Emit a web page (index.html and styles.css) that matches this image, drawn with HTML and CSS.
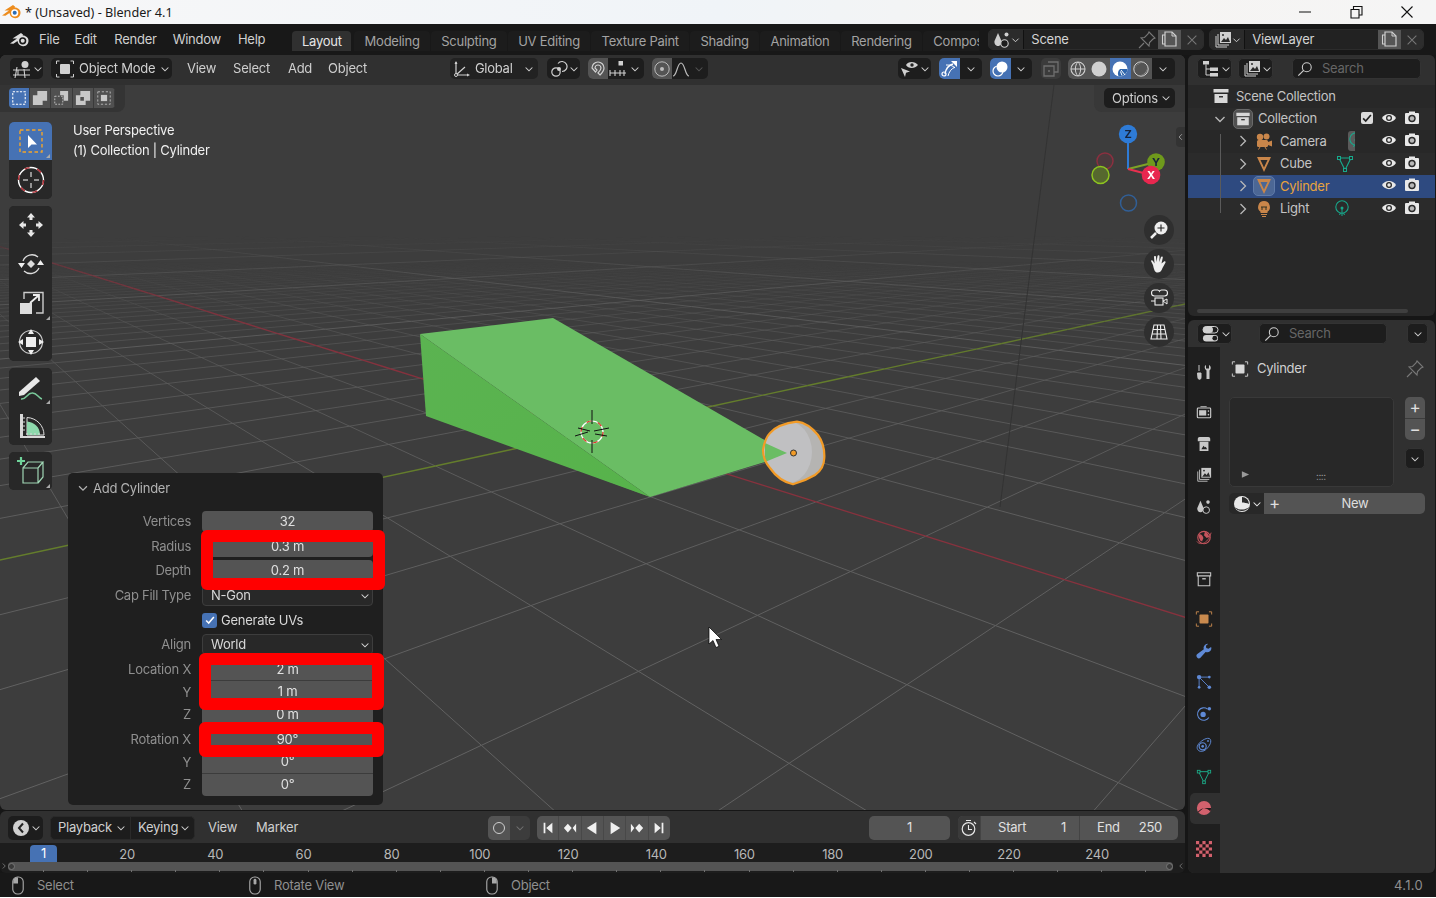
FILE: index.html
```html
<!DOCTYPE html>
<html lang="en">
<head>
<meta charset="utf-8">
<title>* (Unsaved) - Blender 4.1</title>
<link rel="stylesheet" href="styles.css">
</head>
<body>
<svg class="defs" width="0" height="0" aria-hidden="true">
  <symbol id="chev" viewBox="0 0 16 16"><path d="M3.5 6l4.5 4.5L12.500 6" fill="none" stroke="currentColor" stroke-width="1.4"/></symbol>
  <symbol id="chevr" viewBox="0 0 16 16"><path d="M5.500 3l5 5-5 5" fill="none" stroke="currentColor" stroke-width="1.3"/></symbol>
  <symbol id="blender" viewBox="0 0 20 20"><path d="M12 3L3.500 8.600H8L1 13.400l3.400.4L8.500 11c.4 3 3.200 5.500 6 5.200 3-.2 5-2.700 5-5.500S16.800 5.600 14 5.600l-.4-.1 .6-.8z" fill="currentColor"/><circle cx="13.700" cy="10.800" r="3.600" fill="var(--logo-ring)"/><circle cx="13.700" cy="10.800" r="2" fill="var(--logo-eye)"/></symbol>
  <symbol id="viewport" viewBox="0 0 20 20"><circle cx="13" cy="5.500" r="3.500" fill="currentColor"/><path d="M1 11h17M1 16h17M5 8l-2 11M12 10l1 9M6 11v5" fill="none" stroke="currentColor" stroke-width="1.100"/></symbol>
  <symbol id="objmode" viewBox="0 0 20 20"><rect x="5" y="5" width="10" height="10" rx="1" fill="currentColor"/><path d="M1.500 5V2h3M15.500 2h3v3M18.500 15v3h-3M4.500 18h-3v-3" fill="none" stroke="currentColor" stroke-width="1"/></symbol>
  <symbol id="global" viewBox="0 0 18 18"><path d="M3 15V2M3 15l12 0M3 15l9-8" fill="none" stroke="currentColor" stroke-width="1.200"/><path d="M1.500 4L3 1l1.500 3zM14 13.500l3 1.500-3 1.500z" fill="currentColor"/><circle cx="3" cy="15" r="1.500" fill="#222" stroke="currentColor"/></symbol>
  <symbol id="pivot" viewBox="0 0 18 18"><circle cx="6" cy="12" r="4.200" fill="none" stroke="currentColor" stroke-width="1.200"/><path d="M8 3.500a5 5 0 1 1 4 8" fill="none" stroke="currentColor" stroke-width="1.200"/><circle cx="9" cy="9" r="2" fill="currentColor"/></symbol>
  <symbol id="magnet" viewBox="0 0 18 18"><path d="M3 8a6 6 0 0 1 12 0c0 3-2 5-4 7l-2-2c1.500-1.500 3-3 3-5a3 3 0 0 0-6 0l2 2-1.500 2z" fill="none" stroke="currentColor" stroke-width="1.200"/></symbol>
  <symbol id="snap" viewBox="0 0 18 18"><rect x="9.500" y="1" width="4.500" height="4.500" fill="currentColor"/><path d="M1 13h16M1 10v6M6 10v6M11 10v6M15 10v6" fill="none" stroke="currentColor" stroke-width="1.100"/></symbol>
  <symbol id="propcircle" viewBox="0 0 18 18"><circle cx="9" cy="9" r="7.200" fill="none" stroke="currentColor" stroke-width="1"/><circle cx="9" cy="9" r="2" fill="currentColor"/></symbol>
  <symbol id="falloff" viewBox="0 0 18 18"><path d="M1 16c4 0 4-13 8-13s4 13 8 13" fill="none" stroke="currentColor" stroke-width="1.200"/></symbol>
  <symbol id="visib" viewBox="0 0 20 20"><path d="M7 6c2-4 9-4 12 0-3 4-10 4-12 0z" fill="currentColor"/><circle cx="13" cy="6" r="1.700" fill="#222"/><path d="M2 9l9 3.500-4 1.200L6 18z" fill="currentColor"/></symbol>
  <symbol id="gizmo" viewBox="0 0 18 18"><path d="M5 14C6 8 9 5 13 4" fill="none" stroke="currentColor" stroke-width="1.300"/><path d="M8 16C9 12 11 9 15 7M6 5c3 0 6 0 9 3" fill="none" stroke="currentColor" stroke-width="1"/><path d="M11 1h6v6z" fill="currentColor"/><circle cx="4" cy="14" r="2" fill="none" stroke="currentColor" stroke-width="1.200"/></symbol>
  <symbol id="overlay" viewBox="0 0 18 18"><circle cx="7" cy="11" r="5" fill="none" stroke="currentColor" stroke-width="1.200"/><circle cx="11" cy="7" r="5.500" fill="currentColor"/></symbol>
  <symbol id="xray" viewBox="0 0 18 18"><path d="M6 2h10v10H12M2 6h10v10H2z" fill="none" stroke="currentColor" stroke-width="1.300"/><circle cx="7" cy="11" r="1" fill="currentColor"/></symbol>
  <symbol id="wire" viewBox="0 0 18 18"><circle cx="9" cy="9" r="7" fill="none" stroke="currentColor" stroke-width="1.100"/><path d="M2 9h14M9 2c-3.500 3-3.500 11 0 14M9 2c3.500 3 3.500 11 0 14" fill="none" stroke="currentColor"/></symbol>
  <symbol id="solid" viewBox="0 0 18 18"><circle cx="9" cy="9" r="7.500" fill="currentColor"/></symbol>
  <symbol id="matball" viewBox="0 0 18 18"><circle cx="9" cy="9" r="7.500" fill="currentColor"/><path d="M9 9l7.500 0a7.500 7.500 0 0 1-9 7.300C6 12 8 10 9 9z" fill="#2f66ad"/><path d="M10 10l4 5M9.500 11.500l1.500 4" stroke="currentColor" fill="none"/></symbol>
  <symbol id="rendered" viewBox="0 0 18 18"><circle cx="9" cy="9" r="7.200" fill="none" stroke="currentColor" stroke-width="1"/><path d="M3.500 9A5.500 5.500 0 0 1 9 3.500 5 5 0 0 0 3.500 9zM15 9a6 6 0 0 1-6 6 8 8 0 0 0 6-6z" fill="currentColor"/></symbol>
  <symbol id="pin" viewBox="0 0 18 18"><path d="M11 1l6 6-2 1-3.500 3.500L11 15 3 7l3.500-.5L10 3zM6 12l-5 5" fill="none" stroke="currentColor" stroke-width="1.100"/></symbol>
  <symbol id="newcopy" viewBox="0 0 18 18"><path d="M4 13H1.500V4H4" fill="none" stroke="currentColor" stroke-width="1.100"/><path d="M4 1h7l4 4v10H4z" fill="none" stroke="currentColor" stroke-width="1.200"/><path d="M11 1v4h4" fill="none" stroke="currentColor"/></symbol>
  <symbol id="cross" viewBox="0 0 16 16"><path d="M3 3l10 10M13 3L3 13" fill="none" stroke="currentColor" stroke-width="1.200"/></symbol>
  <symbol id="scene" viewBox="0 0 18 18"><path d="M5 2l3.500 8c.6 2.500-1 5-3.500 5s-4-2.500-3.500-5z" fill="currentColor"/><circle cx="13.500" cy="3.500" r="2" fill="currentColor"/><circle cx="11.500" cy="12.500" r="3.700" fill="var(--panel,#1d1d1d)" stroke="currentColor" stroke-width="1.100"/></symbol>
  <symbol id="layers" viewBox="0 0 18 18"><path d="M2 5v11h11M4 3v11h11" fill="none" stroke="currentColor" stroke-width="1"/><rect x="6" y="1" width="11" height="11" fill="currentColor"/><path d="M7 11l3-4 2 2 2-3 2 5z" fill="#2a2a2a"/><circle cx="9" cy="4" r="1" fill="#2a2a2a"/></symbol>
  <symbol id="outliner" viewBox="0 0 18 18"><rect x="1" y="1" width="6" height="3.500" fill="currentColor"/><path d="M4 4.500V15h4M4 9h4" fill="none" stroke="currentColor"/><rect x="8" y="7.500" width="8" height="3.500" fill="currentColor"/><rect x="8" y="13" width="8" height="3.500" fill="currentColor"/></symbol>
  <symbol id="propsed" viewBox="0 0 18 18"><rect x="1" y="1.500" width="15" height="6.500" rx="3.200" fill="none" stroke="currentColor" stroke-width="1"/><rect x="1" y="1.500" width="10" height="6.500" rx="3.200" fill="currentColor"/><rect x="1" y="10" width="15" height="6.500" rx="3.200" fill="currentColor"/><circle cx="12.800" cy="13.200" r="2.400" fill="#1d1d1d"/></symbol>
  <symbol id="search" viewBox="0 0 18 18"><circle cx="11" cy="7" r="5" fill="none" stroke="currentColor" stroke-width="1.200"/><path d="M7.500 10.500L1.500 16.500" fill="none" stroke="currentColor" stroke-width="1.400"/></symbol>
  <symbol id="coll" viewBox="0 0 18 18"><path d="M1.500 2h15v3.500h-15z" fill="currentColor"/><path d="M2.500 7h13v9h-13z" fill="currentColor"/><rect x="7" y="9" width="4" height="1.500" fill="#333"/></symbol>
  <symbol id="camera" viewBox="0 0 18 18"><circle cx="5" cy="5" r="3.200" fill="currentColor"/><circle cx="11.500" cy="4.500" r="3" fill="currentColor"/><rect x="2" y="8" width="11" height="7" rx="1.500" fill="currentColor"/><path d="M13 10l4-1.500v6L13 13z" fill="currentColor"/><path d="M5 15l-1.500 2.500M10 15l1.500 2.500" stroke="currentColor" fill="none"/></symbol>
  <symbol id="mesh" viewBox="0 0 18 18"><path d="M2 2h14L9 17zM5.500 5h7L9 12.500z" fill="currentColor" fill-rule="evenodd"/></symbol>
  <symbol id="bulb" viewBox="0 0 18 18"><path d="M9 1a6 6 0 0 1 3.500 10.800V13h-7v-1.200A6 6 0 0 1 9 1z" fill="currentColor"/><path d="M6 14.500h6M7 16.500h4" stroke="currentColor" fill="none"/><path d="M6 7h6M7 7v3M11 7v3" stroke="#332" fill="none"/></symbol>
  <symbol id="dmesh" viewBox="0 0 18 18"><path d="M3 3h12L9 15z" fill="none" stroke="currentColor" stroke-width="1.100"/><rect x="1.500" y="1.500" width="3" height="3" fill="var(--dm)" stroke="currentColor"/><rect x="13.500" y="1.500" width="3" height="3" fill="var(--dm)" stroke="currentColor"/><rect x="7.500" y="13.500" width="3" height="3" fill="var(--dm)" stroke="currentColor"/></symbol>
  <symbol id="dlight" viewBox="0 0 18 18"><circle cx="9" cy="7" r="6.200" fill="none" stroke="currentColor" stroke-width="1.100"/><circle cx="9" cy="8" r="1.500" fill="currentColor"/><path d="M9 9v7M7.500 13l-1 2M10.500 13l1 2" stroke="currentColor" fill="none"/></symbol>
  <symbol id="eye" viewBox="0 0 16 16"><path d="M1 8c3-5.500 11-5.500 14 0-3 5.500-11 5.500-14 0z" fill="currentColor"/><circle cx="8" cy="8" r="3" fill="#2b2b2b"/><circle cx="8" cy="8" r="1.700" fill="currentColor"/></symbol>
  <symbol id="render" viewBox="0 0 16 16"><rect x="1" y="3" width="14" height="11" rx="1" fill="currentColor"/><rect x="5" y="1.500" width="6" height="2" fill="currentColor"/><circle cx="8" cy="8.500" r="3.700" fill="#2b2b2b"/><circle cx="8" cy="8.500" r="2.200" fill="currentColor" opacity=".75"/></symbol>
  <symbol id="tool" viewBox="0 0 16 16"><path d="M3 1v6M1.500 9h3.500v4.500A1.500 1.500 0 0 1 2 14z" fill="currentColor" stroke="currentColor"/><path d="M10 1v3.500h3V1c2 1 2.500 4 .5 5.500V15h-3V6.500C8.500 5 8 2 10 1z" fill="currentColor"/></symbol>
  <symbol id="tabrender" viewBox="0 0 18 18"><path d="M5 3h7" stroke="currentColor" fill="none"/><rect x="1.500" y="4.500" width="15" height="11" rx="1" fill="none" stroke="currentColor" stroke-width="1.300"/><rect x="3.500" y="7" width="8" height="6" fill="currentColor"/><circle cx="14" cy="8" r=".9" fill="currentColor"/><circle cx="14" cy="12" r=".9" fill="currentColor"/></symbol>
  <symbol id="printer" viewBox="0 0 18 18"><path d="M2 3q0-2 2-2h10q2 0 2 2v3H2z" fill="currentColor"/><path d="M4 6.500h10V17H4z" fill="currentColor"/><path d="M6 15l2.500-4 1.500 2 1-1 1.500 3z" fill="#222"/></symbol>
  <symbol id="world" viewBox="0 0 18 18"><circle cx="9" cy="8.500" r="7" fill="none" stroke="currentColor" stroke-width="1.300"/><path d="M3 5c3-1 4 1 5 3s-1 3-1 5l-2-1-2-4zM10 2c3 1 4 3 5 6l-3 1-3-3z" fill="currentColor"/><path d="M1 13C4 17 13 17 17 3" fill="none" stroke="currentColor"/></symbol>
  <symbol id="box" viewBox="0 0 18 18"><path d="M1.500 2h15v3.500h-15zM2.500 5.500h13V16.500h-13z" fill="none" stroke="currentColor" stroke-width="1.200"/><rect x="7" y="8" width="4" height="1.500" fill="currentColor"/></symbol>
  <symbol id="modifier" viewBox="0 0 18 18"><path d="M13.500 1a4.500 4.500 0 0 0-4.700 6L1.500 12.500a2.500 2.500 0 0 0 3.500 4L10.800 10A4.500 4.500 0 0 0 17 4.500L14 6.500l-2.500-1-.3-2.500z" fill="currentColor"/></symbol>
  <symbol id="particles" viewBox="0 0 18 18"><circle cx="3.500" cy="3.500" r="2.500" fill="currentColor"/><circle cx="15" cy="3.500" r="1.500" fill="currentColor"/><circle cx="3.500" cy="15" r="1.500" fill="currentColor"/><circle cx="15" cy="15" r="2" fill="currentColor"/><path d="M3.500 3.500H15M3.500 3.500V15M3.500 3.500L15 15" stroke="currentColor" fill="none"/></symbol>
  <symbol id="physics" viewBox="0 0 18 18"><circle cx="8" cy="9.500" r="3" fill="currentColor"/><circle cx="15" cy="3" r="2" fill="currentColor"/><path d="M13 3.500A7 7 0 1 0 14.500 13" fill="none" stroke="currentColor" stroke-width="1.200"/></symbol>
  <symbol id="constraint" viewBox="0 0 18 18"><path d="M13 1.500c3-.5 4 2 3.500 4.500-1 4-5 9-9 10S.5 14 1.500 10.500C3 6 9 2 13 1.500z" fill="none" stroke="currentColor" stroke-width="1.100"/><circle cx="7.500" cy="10.500" r="4" fill="none" stroke="currentColor" stroke-width="1.300"/><circle cx="7.500" cy="10.500" r="1.500" fill="currentColor"/><circle cx="13.500" cy="4.500" r="1" fill="currentColor"/></symbol>
  <symbol id="material" viewBox="0 0 18 18"><circle cx="9" cy="9" r="8" fill="currentColor"/><path d="M9 9h8c0 1-.3 2.500-.9 3.700C14 10.500 11 9.500 9 9zM9 9c-2 .5-5 2-6.800 4.200l.6.800C5 12 7 10 9 9z" fill="#22181a"/></symbol>
  <symbol id="tmat" viewBox="0 0 18 18"><circle cx="9" cy="9" r="8" fill="currentColor"/><path d="M9 2a7 7 0 0 1 7 7c-2-1-5-1.500-7-1.500z" fill="#2b2b2b"/><path d="M1.500 12c3 3 11 4 15-.5-3 6-12 6-15 .5z" fill="#2b2b2b"/></symbol>
  <symbol id="checker" viewBox="0 0 15 15"><rect width="15" height="15" fill="currentColor"/><path d="M3 0h3v3H3zM9 0h3v3H9zM0 3h3v3H0zM6 3h3v3H6zM12 3h3v3h-3zM3 6h3v3H3zM9 6h3v3H9zM0 9h3v3H0zM6 9h3v3H6zM12 9h3v3h-3zM3 12h3v3H3zM9 12h3v3H9z" fill="#1e1617"/></symbol>
  <symbol id="mouseL" viewBox="0 0 14 20"><rect x="1.500" y="1" width="11" height="18" rx="5" fill="none" stroke="currentColor" stroke-width="1.200"/><path d="M2 8V5a4 4 0 0 1 5-3.500V8z" fill="currentColor"/></symbol>
  <symbol id="mouseM" viewBox="0 0 14 20"><rect x="1.500" y="1" width="11" height="18" rx="5" fill="none" stroke="currentColor" stroke-width="1.200"/><rect x="5.500" y="3" width="3" height="6" rx="1.500" fill="currentColor"/></symbol>
  <symbol id="mouseR" viewBox="0 0 14 20"><rect x="1.500" y="1" width="11" height="18" rx="5" fill="none" stroke="currentColor" stroke-width="1.200"/><path d="M12 8V5a4 4 0 0 0-5-3.500V8z" fill="currentColor"/></symbol>
  <symbol id="clock" viewBox="0 0 18 18"><circle cx="8.500" cy="10" r="6.300" fill="none" stroke="currentColor" stroke-width="1.200"/><path d="M8.500 6v4.500H12M6 1.500h5M14 3l2 2" stroke="currentColor" fill="none" stroke-width="1.100"/></symbol>
  <symbol id="timeicon" viewBox="0 0 18 18"><circle cx="9" cy="9" r="8" fill="currentColor"/><path d="M11 4.500L7 9l4 4.500" fill="none" stroke="#222" stroke-width="2"/></symbol>
  <symbol id="jstart" viewBox="0 0 16 16"><path d="M3 2h2v12H3zM13 2v12L6 8z" fill="currentColor"/></symbol>
  <symbol id="jend" viewBox="0 0 16 16"><path d="M11 2h2v12h-2zM3 2v12l7-6z" fill="currentColor"/></symbol>
  <symbol id="prevk" viewBox="0 0 16 16"><path d="M5.500 3l4.500 5-4.500 5L1 8zM15 3v10l-4-5z" fill="currentColor"/></symbol>
  <symbol id="nextk" viewBox="0 0 16 16"><path d="M10.500 3L15 8l-4.500 5L6 8zM1 3v10l4-5z" fill="currentColor"/></symbol>
  <symbol id="playb" viewBox="0 0 16 16"><path d="M13 1v14L2 8z" fill="currentColor"/></symbol>
  <symbol id="play" viewBox="0 0 16 16"><path d="M3 1v14l11-7z" fill="currentColor"/></symbol>
</svg>

<div class="app">
  <header class="titlebar">
    <svg class="title-logo"><use href="#blender"/></svg>
    <span class="title-text">* (Unsaved) - Blender 4.1</span>
    <div class="win-controls">
      <svg viewBox="0 0 16 16" class="win-ic"><path d="M2 8h12" stroke="#111" fill="none"/></svg>
      <svg viewBox="0 0 16 16" class="win-ic"><path d="M3 5.500h8v8.500H3zM5.500 5V2.500H14V11h-2.500" fill="none" stroke="#111" stroke-width="1.100"/></svg>
      <svg viewBox="0 0 16 16" class="win-ic"><path d="M2.500 2.500l11 11M13.500 2.500l-11 11" stroke="#111" fill="none" stroke-width="1.100"/></svg>
    </div>
  </header>

  <div class="topbar">
    <svg class="top-logo"><use href="#blender"/></svg>
    <nav class="top-menu"><span>File</span><span>Edit</span><span>Render</span><span>Window</span><span>Help</span></nav>
    <div class="ws-tabs">
      <span class="ws-tab active">Layout</span><span class="ws-tab">Modeling</span><span class="ws-tab">Sculpting</span><span class="ws-tab">UV Editing</span><span class="ws-tab">Texture Paint</span><span class="ws-tab">Shading</span><span class="ws-tab">Animation</span><span class="ws-tab">Rendering</span><span class="ws-tab">Compositing</span>
    </div>
    <div class="selector scene-sel">
      <span class="sel-type"><svg class="ic18"><use href="#scene"/></svg><svg class="ic12"><use href="#chev"/></svg></span>
      <span class="sel-name">Scene<svg class="ic18 dim"><use href="#pin"/></svg></span>
      <span class="sel-copy"><svg class="ic18"><use href="#newcopy"/></svg></span>
      <span class="sel-x"><svg class="ic14"><use href="#cross"/></svg></span>
    </div>
    <div class="selector layer-sel">
      <span class="sel-type"><svg class="ic18"><use href="#layers"/></svg><svg class="ic12"><use href="#chev"/></svg></span>
      <span class="sel-name">ViewLayer</span>
      <span class="sel-copy"><svg class="ic18"><use href="#newcopy"/></svg></span>
      <span class="sel-x"><svg class="ic14"><use href="#cross"/></svg></span>
    </div>
  </div>

  <div class="main">
    <div class="left-col">
      <section class="viewport">
        <canvas id="grid" class="vp-grid" width="1185" height="755"></canvas>
        <svg class="vp-scene" viewBox="0 55 1185 755">
          <line x1="1054" y1="85" x2="1000" y2="507" stroke="#333" stroke-width="1"/>
          <defs>
            <linearGradient id="sideface" x1="0" y1="0" x2="1" y2="1"><stop offset="0" stop-color="#5bb351"/><stop offset="1" stop-color="#57b34b"/></linearGradient>
            <clipPath id="cylclip"><path d="M763 450Q765 438 770 433Q778 424 797 421.700Q808 423 818 435Q825 445 824.300 458Q824 469 815 475Q805 481 793 484.300Q779 481 770 468Q763 460 763 450z"/></clipPath>
          </defs>
          <polygon points="420,334 553,318 775,446 765,462 650,497" fill="#6abd64"/>
          <polygon points="420,334 426,416 650,497" fill="url(#sideface)"/>
          <g clip-path="url(#cylclip)">
            <rect x="755" y="415" width="80" height="75" fill="#b5b4b2"/>
            <ellipse cx="785" cy="452" rx="27" ry="32" fill="#c0c0c2"/>
          </g>
          <polygon points="765,443 787,453 765,462" fill="#6abd64"/>
          <path d="M763 450Q765 438 770 433Q778 424 797 421.700Q808 423 818 435Q825 445 824.300 458Q824 469 815 475Q805 481 793 484.300Q779 481 770 468Q763 460 763 450z" fill="none" stroke="#f29b27" stroke-width="2.200"/>
          <circle cx="793.500" cy="453" r="3" fill="#f29b27" stroke="#333" stroke-width="1"/>
          <circle cx="592" cy="432" r="11" fill="none" stroke="#fff" stroke-width="1.200"/>
          <circle cx="592" cy="432" r="11" fill="none" stroke="#d5281a" stroke-width="1.200" stroke-dasharray="5 6.500"/>
          <path d="M592 410v14M592 440v13M575 436l13-4M578 428l12 3M594 431l15-3M595 434l12 2" stroke="#111" fill="none"/>
          <circle cx="1128.500" cy="203" r="8" fill="none" stroke="#315f96" stroke-width="1.500"/>
          <circle cx="1105" cy="161" r="8" fill="#4b3a3d" stroke="#8c3040" stroke-width="1.500"/>
          <circle cx="1100.500" cy="175" r="8.500" fill="#56682e" stroke="#8ec520" stroke-width="1.500"/>
          <path d="M1128 134v35" stroke="#2e7bd6" stroke-width="2"/>
          <path d="M1128 169l28-7" stroke="#7da326" stroke-width="2.200"/>
          <path d="M1128 169l23 6" stroke="#e8304f" stroke-width="2.200"/>
          <circle cx="1128" cy="134" r="9.200" fill="#2e7bd6"/>
          <circle cx="1156" cy="162" r="8.800" fill="#6f9a1c"/>
          <circle cx="1151" cy="175" r="9.300" fill="#e8274f"/>
          <text class="axis-label" x="1128" y="138">Z</text>
          <text class="axis-label" x="1156" y="166">Y</text>
          <text class="axis-label white" x="1151" y="179">X</text>
          <path d="M709 627v17l4-3.500 3 7 3-1.300-3-6.700h5.500z" fill="#fff" stroke="#000" stroke-width=".7"/>
        </svg>

        <div class="vp-header">
          <span class="hbtn w-type"><svg class="ic20"><use href="#viewport"/></svg><svg class="ic12"><use href="#chev"/></svg></span>
          <span class="hbtn w-mode"><svg class="ic20"><use href="#objmode"/></svg><span>Object Mode</span><svg class="ic12"><use href="#chev"/></svg></span>
          <nav class="vp-menu"><span>View</span><span>Select</span><span>Add</span><span>Object</span></nav>
          <span class="hbtn w-global"><svg class="ic18"><use href="#global"/></svg><span>Global</span><svg class="ic12"><use href="#chev"/></svg></span>
          <span class="hbtn w-pivot"><svg class="ic18"><use href="#pivot"/></svg><svg class="ic12"><use href="#chev"/></svg></span>
          <span class="hbtn w-snap"><span class="seg lit"><svg class="ic18"><use href="#magnet"/></svg></span><svg class="ic18"><use href="#snap"/></svg><svg class="ic12"><use href="#chev"/></svg></span>
          <span class="hbtn w-prop"><span class="seg lit"><svg class="ic18"><use href="#propcircle"/></svg></span><svg class="ic18"><use href="#falloff"/></svg><svg class="ic12 faint"><use href="#chev"/></svg></span>
          <span class="hbtn w-vis"><svg class="ic20"><use href="#visib"/></svg><svg class="ic12"><use href="#chev"/></svg></span>
          <span class="hbtn w-giz"><span class="seg blue"><svg class="ic18"><use href="#gizmo"/></svg></span><span class="seg-chev"><svg class="ic12"><use href="#chev"/></svg></span></span>
          <span class="hbtn w-over"><span class="seg blue"><svg class="ic18"><use href="#overlay"/></svg></span><span class="seg-chev"><svg class="ic12"><use href="#chev"/></svg></span></span>
          <span class="hbtn w-xray"><svg class="ic18 faint"><use href="#xray"/></svg></span>
          <span class="hbtn w-shade"><span class="seg lit"><svg class="ic18"><use href="#wire"/></svg></span><span class="seg lit"><svg class="ic18"><use href="#solid"/></svg></span><span class="seg blue"><svg class="ic18"><use href="#matball"/></svg></span><span class="seg lit"><svg class="ic18"><use href="#rendered"/></svg></span><span class="seg-chev"><svg class="ic12"><use href="#chev"/></svg></span></span>
        </div>

        <div class="tool-settings">
          <div class="selmodes">
            <span class="sm on"><svg viewBox="0 0 18 18" class="ic18"><rect x="2" y="2" width="14" height="14" fill="none" stroke="#fff" stroke-width="1.200" stroke-dasharray="2.500 1.500"/></svg></span>
            <span class="sm"><svg viewBox="0 0 18 18" class="ic18"><path d="M6 1h11v11h-5v5H1V6h5z" fill="#c8c8c8"/></svg></span>
            <span class="sm"><svg viewBox="0 0 18 18" class="ic18"><path d="M8 1h9v11h-5V6H8z" fill="#c8c8c8"/><rect x="2" y="7" width="9" height="9" fill="none" stroke="#c8c8c8" stroke-dasharray="2 1.500"/></svg></span>
            <span class="sm"><svg viewBox="0 0 18 18" class="ic18"><path d="M6 1h11v11h-5V6H6zM1 6h11v11H1zM6 8v4h4V8z" fill="#c8c8c8" fill-rule="evenodd"/></svg></span>
            <span class="sm"><svg viewBox="0 0 18 18" class="ic18"><rect x="2" y="2" width="14" height="14" fill="none" stroke="#bbb" stroke-dasharray="2.500 2"/><rect x="5.500" y="5.500" width="7" height="7" fill="#c8c8c8"/></svg></span>
          </div>
        </div>
        <div class="options-tab"><span class="hbtn w-options"><span>Options</span><svg class="ic12"><use href="#chev"/></svg></span></div>
        <span class="panel-arrow"><svg class="ic12"><use href="#chevr"/></svg></span>

        <div class="viewinfo"><div>User Perspective</div><div>(1) Collection | Cylinder</div></div>

        <div class="tools">
          <div class="tool-group">
            <span class="tool on corner"><svg viewBox="0 0 28 28" class="tool-ic"><rect x="3" y="3" width="22" height="22" fill="none" stroke="#f2a52c" stroke-width="1.400" stroke-dasharray="3.500 2.500"/><path d="M11 8v13l3.500-3.500h5.500z" fill="#fff"/></svg></span>
            <span class="tool"><svg viewBox="0 0 28 28" class="tool-ic"><circle cx="14" cy="14" r="12.500" fill="none" stroke="#fff" stroke-width="1.400"/><circle cx="14" cy="14" r="12.500" fill="none" stroke="#b02c34" stroke-width="1.400" stroke-dasharray="5 8"/><path d="M14 6v5M14 17v5M6 14h5M17 14h5" stroke="#fff" fill="none"/></svg></span>
          </div>
          <div class="tool-group">
            <span class="tool"><svg viewBox="0 0 28 28" class="tool-ic"><path d="M14 2l4 4.500h-2.500V9h-3V6.500H10zM14 26l4-4.500h-2.500V19h-3v2.500H10zM2 14l4.500-4v2.500H9v3H6.500V18zM26 14l-4.500-4v2.500H19v3h2.500V18z" fill="#e6e6e6"/></svg></span>
            <span class="tool"><svg viewBox="0 0 28 28" class="tool-ic"><path d="M14 10l4 4-4 4-4-4z" fill="#ddd"/><path d="M6 11A9.500 9.500 0 0 1 21 7M22 18A9.500 9.500 0 0 1 7 21" fill="none" stroke="#ddd" stroke-width="1.300"/><path d="M1 13h7l-3.500 5zM20 15h7l-3.500-5z" fill="#eee"/></svg></span>
            <span class="tool corner"><svg viewBox="0 0 28 28" class="tool-ic"><path d="M7 10V3.500h19V24h-7" fill="none" stroke="#ccc" stroke-width="1.400"/><rect x="3" y="14" width="12" height="11" fill="#ddd"/><path d="M13 14l8-7M16 6h6v6" fill="none" stroke="#eee" stroke-width="1.800"/></svg></span>
            <span class="tool"><svg viewBox="0 0 28 28" class="tool-ic"><circle cx="14" cy="14" r="11.500" fill="none" stroke="#ccc" stroke-width="1.200"/><rect x="9" y="9" width="10" height="10" fill="#eee"/><path d="M14 1l3 5h-6zM14 27l3-5h-6zM1 14l5-3v6zM27 14l-5-3v6z" fill="#eee"/></svg></span>
          </div>
          <div class="tool-group">
            <span class="tool corner"><svg viewBox="0 0 28 28" class="tool-ic"><path d="M2 19L19 4l4 4-16 14-5 1z" fill="#e8e8e8"/><path d="M4 26c5 1 6-6 11-6 5-.5 6 5 10 6" fill="none" stroke="#79c99a" stroke-width="1.500"/></svg></span>
            <span class="tool"><svg viewBox="0 0 28 28" class="tool-ic"><path d="M10 5.500V23h17c0-9-7-17-17-17.500z" fill="none" stroke="#ddd"/><path d="M10 9.500V23h13C23 15 17 10 10 9.500z" fill="#8ed9ad"/><path d="M3 2h3v24H3zM3 24h25v2H3z" fill="#d8d8d8"/><path d="M6 6h2M6 10h2M6 14h2M6 18h2M10 23v-2M14 23v-2M18 23v-2M22 23v-2" stroke="#d8d8d8" fill="none"/></svg></span>
          </div>
          <div class="tool-group">
            <span class="tool corner"><svg viewBox="0 0 28 28" class="tool-ic"><path d="M6 11h15v15H6zM6 11l5-6h15l-5 6M21 26l5-6V5" fill="none" stroke="#9fd6b4" stroke-width="1.200"/><path d="M4 0v8M0 4h8" stroke="#6fd39a" stroke-width="2.200" fill="none"/></svg></span>
          </div>
        </div>

        <div class="nav-btns">
          <span class="nav-btn"><svg viewBox="0 0 20 20" class="ic20"><circle cx="12" cy="8" r="6.500" fill="#eee"/><path d="M7 13l-5 5" stroke="#eee" stroke-width="2.500"/><path d="M12 4.500v7M8.500 8h7" stroke="#222" stroke-width="1.100"/></svg></span>
          <span class="nav-btn"><svg viewBox="0 0 20 20" class="ic20"><path d="M4 11L2 7c0-1 1.500-1 2 0l1.500 2.500L5 3c0-1.200 2-1.200 2 0l.5 5L8.500 2c.2-1.200 2.100-1 2 .2L10.300 8l1.700-5c.4-1 2-.7 1.800.5L12.500 9.500l2.500-2c1-.6 2 .3 1.400 1.300L13.500 14c-1 3-2.500 4.500-5 4.500C6 18.500 5 16 4 11z" fill="#eee"/></svg></span>
          <span class="nav-btn"><svg viewBox="0 0 20 20" class="ic20"><path d="M5.500 2h3a2.200 2.200 0 0 1 2 1.200A2.300 2.300 0 0 1 12.500 2h3a3 3 0 0 1 0 6h-10a3 3 0 0 1 0-6z" fill="none" stroke="#eee" stroke-width="1.100"/><rect x="6" y="10" width="8" height="7" fill="none" stroke="#eee" stroke-width="1.100"/><path d="M6 13H2M14 13l4-2v5z" stroke="#eee" fill="none"/></svg></span>
          <span class="nav-btn"><svg viewBox="0 0 20 20" class="ic20"><path d="M5 3h10l3 14H2zM4 7.500h12M3 12h14M8.500 3L8 17M11.500 3l.5 14" fill="none" stroke="#eee" stroke-width="1.100"/></svg></span>
        </div>

        <div class="redo">
          <div class="redo-title"><svg class="ic14"><use href="#chev"/></svg>Add Cylinder</div>
          <div class="prop-row"><label>Vertices</label><span class="field">32</span></div>
          <div class="prop-row"><label>Radius</label><span class="field">0.3 m</span></div>
          <div class="prop-row"><label>Depth</label><span class="field">0.2 m</span></div>
          <div class="prop-row"><label>Cap Fill Type</label><span class="field dark"><span>N-Gon</span><svg class="ic12"><use href="#chev"/></svg></span></div>
          <div class="prop-row"><span></span><span class="check-row"><span class="check"><svg viewBox="0 0 14 14" class="ic12"><path d="M2.500 7.500L5.500 10.500 11.500 3.500" fill="none" stroke="#fff" stroke-width="1.800"/></svg></span>Generate UVs</span></div>
          <div class="prop-row"><label>Align</label><span class="field dark"><span>World</span><svg class="ic12"><use href="#chev"/></svg></span></div>
          <div class="prop-group g-loc">
            <div class="prop-row tight"><label>Location X</label><span class="field first">2 m</span></div>
            <div class="prop-row tight"><label>Y</label><span class="field">1 m</span></div>
            <div class="prop-row tight"><label>Z</label><span class="field last">0 m</span></div>
          </div>
          <div class="prop-group g-rot">
            <div class="prop-row tight"><label>Rotation X</label><span class="field first">90°</span></div>
            <div class="prop-row tight"><label>Y</label><span class="field">0°</span></div>
            <div class="prop-row tight"><label>Z</label><span class="field last">0°</span></div>
          </div>
        </div>
        <div class="redbox rb-a"></div>
        <div class="redbox rb-b"></div>
        <div class="redbox rb-c"></div>
      </section>

      <section class="timeline">
        <div class="tl-head">
          <span class="hbtn w-tltype"><svg class="ic18"><use href="#timeicon"/></svg><svg class="ic12"><use href="#chev"/></svg></span>
          <span class="hbtn w-play"><span class="tl-pop">Playback<svg class="ic12"><use href="#chev"/></svg></span><span class="tl-pop">Keying<svg class="ic12"><use href="#chev"/></svg></span></span>
          <nav class="tl-menu"><span>View</span><span>Marker</span></nav>
          <span class="tl-rec"><span class="rec-ic"></span><svg class="ic12 faint"><use href="#chev"/></svg></span>
          <span class="tl-trans">
            <span><svg class="ic14"><use href="#jstart"/></svg></span><span><svg class="ic14"><use href="#prevk"/></svg></span><span><svg class="ic14"><use href="#playb"/></svg></span><span><svg class="ic14"><use href="#play"/></svg></span><span><svg class="ic14"><use href="#nextk"/></svg></span><span><svg class="ic14"><use href="#jend"/></svg></span>
          </span>
          <span class="tl-frame">1</span>
          <span class="tl-range">
            <span class="tl-clock"><svg class="ic18"><use href="#clock"/></svg></span>
            <span class="tl-val"><span>Start</span><span>1</span></span>
            <span class="tl-val"><span>End</span><span>250</span></span>
          </span>
        </div>
        <div class="tl-scrub">
          <span class="cur-frame">1</span>
          <div class="ruler"><span>20</span><span>40</span><span>60</span><span>80</span><span>100</span><span>120</span><span>140</span><span>160</span><span>180</span><span>200</span><span>220</span><span>240</span></div>
          <div class="tl-scroll"><i class="knob"></i><i class="knob"></i></div>
          <i class="tl-ticks"></i>
          <svg class="tl-arrow tl-arrow-l"><use href="#chevr"/></svg>
          <svg class="tl-arrow tl-arrow-r"><use href="#chevr"/></svg>
        </div>
      </section>
    </div>

    <div class="right-col">
      <section class="outliner">
        <div class="ol-head">
          <span class="hbtn w-oltype"><svg class="ic18"><use href="#outliner"/></svg><svg class="ic12"><use href="#chev"/></svg></span>
          <span class="hbtn w-oltype"><svg class="ic18"><use href="#layers"/></svg><svg class="ic12"><use href="#chev"/></svg></span>
          <span class="searchbox ol-search"><svg class="ic16"><use href="#search"/></svg>Search</span>
        </div>
        <div class="ol-tree">
          <div class="ol-row lvl0"><svg class="ic18 light"><use href="#coll"/></svg><span class="ol-name">Scene Collection</span></div>
          <div class="ol-row alt lvl1"><svg class="ic16 chev"><use href="#chev"/></svg><span class="coll-hi"><svg class="ic16 light"><use href="#coll"/></svg></span><span class="ol-name">Collection</span>
            <span class="ol-right"><span class="vis-check"><svg viewBox="0 0 14 14" class="ic12"><path d="M2.500 7.500L5.500 10.500 11.500 3.500" fill="none" stroke="#222" stroke-width="2"/></svg></span><svg class="ic16"><use href="#eye"/></svg><svg class="ic16"><use href="#render"/></svg></span></div>
          <div class="ol-row lvl2"><svg class="ic16 chev"><use href="#chevr"/></svg><svg class="ic18 orange"><use href="#camera"/></svg><span class="ol-name n-cam">Camera</span><span class="cam-chip"><svg class="ic18 teal"><use href="#dlight"/></svg></span>
            <span class="ol-right"><svg class="ic16"><use href="#eye"/></svg><svg class="ic16"><use href="#render"/></svg></span></div>
          <div class="ol-row alt lvl2"><svg class="ic16 chev"><use href="#chevr"/></svg><svg class="ic18 orange"><use href="#mesh"/></svg><span class="ol-name n-cube">Cube</span><svg class="ic18 teal"><use href="#dmesh"/></svg>
            <span class="ol-right"><svg class="ic16"><use href="#eye"/></svg><svg class="ic16"><use href="#render"/></svg></span></div>
          <div class="ol-row sel lvl2"><svg class="ic16 chev"><use href="#chevr"/></svg><span class="mesh-hi"><svg class="ic18 orange"><use href="#mesh"/></svg></span><span class="ol-name n-cyl">Cylinder</span>
            <span class="ol-right"><svg class="ic16"><use href="#eye"/></svg><svg class="ic16"><use href="#render"/></svg></span></div>
          <div class="ol-row alt lvl2"><svg class="ic16 chev"><use href="#chevr"/></svg><svg class="ic18 orange"><use href="#bulb"/></svg><span class="ol-name n-light">Light</span><svg class="ic18 teal"><use href="#dlight"/></svg>
            <span class="ol-right"><svg class="ic16"><use href="#eye"/></svg><svg class="ic16"><use href="#render"/></svg></span></div>
          <i class="tree-line"></i>
        </div>
        <div class="ol-scroll"></div>
      </section>

      <section class="props">
        <div class="p-head">
          <span class="hbtn w-oltype"><svg class="ic18"><use href="#propsed"/></svg><svg class="ic12"><use href="#chev"/></svg></span>
          <span class="searchbox p-search"><svg class="ic16"><use href="#search"/></svg>Search</span>
          <span class="hbtn w-pchev"><svg class="ic12"><use href="#chev"/></svg></span>
        </div>
        <div class="p-body">
          <div class="p-tabs">
            <span class="ptab t-grey"><svg class="ic16"><use href="#tool"/></svg></span>
            <span class="ptab t-grey gap"><svg class="ic16"><use href="#tabrender"/></svg></span>
            <span class="ptab t-grey"><svg class="ic16"><use href="#printer"/></svg></span>
            <span class="ptab t-grey"><svg class="ic16"><use href="#layers"/></svg></span>
            <span class="ptab t-grey"><svg class="ic16"><use href="#scene"/></svg></span>
            <span class="ptab t-red"><svg class="ic16"><use href="#world"/></svg></span>
            <span class="ptab t-grey gap"><svg class="ic16"><use href="#box"/></svg></span>
            <span class="ptab t-orange gap"><svg class="ic18"><use href="#objmode"/></svg></span>
            <span class="ptab t-blue"><svg class="ic16"><use href="#modifier"/></svg></span>
            <span class="ptab t-blue"><svg class="ic16"><use href="#particles"/></svg></span>
            <span class="ptab t-blue"><svg class="ic16"><use href="#physics"/></svg></span>
            <span class="ptab t-blue"><svg class="ic16"><use href="#constraint"/></svg></span>
            <span class="ptab t-teal"><svg class="ic16"><use href="#dmesh"/></svg></span>
            <span class="ptab t-pink active"><svg class="ic16"><use href="#material"/></svg></span>
            <span class="ptab t-pink gap"><svg class="ic16"><use href="#checker"/></svg></span>
          </div>
          <div class="p-content">
            <div class="p-crumb"><svg class="ic18 light"><use href="#objmode"/></svg><span>Cylinder</span><svg class="ic18 dim"><use href="#pin"/></svg></div>
            <div class="slot-row">
              <div class="slot-list"><svg viewBox="0 0 10 10" class="slot-play"><path d="M1 1.500l8 3.500-8 3.500z" fill="#999"/></svg><span class="slot-grip">::::</span></div>
              <div class="slot-side">
                <div class="slot-btns"><span>+</span><span>−</span></div>
                <span class="hbtn w-slotchev"><svg class="ic12"><use href="#chev"/></svg></span>
              </div>
            </div>
            <div class="mat-sel">
              <span class="mat-type"><svg class="ic18"><use href="#tmat"/></svg><svg class="ic12"><use href="#chev"/></svg></span>
              <span class="mat-new"><b>+</b><span>New</span></span>
            </div>
          </div>
        </div>
      </section>
    </div>
  </div>

  <footer class="status">
    <span class="st st-a"><svg class="st-ic"><use href="#mouseL"/></svg>Select</span>
    <span class="st st-b"><svg class="st-ic"><use href="#mouseM"/></svg>Rotate View</span>
    <span class="st st-c"><svg class="st-ic"><use href="#mouseR"/></svg>Object</span>
    <span class="st-ver">4.1.0</span>
  </footer>
</div>
<script src="grid.js"></script>
</body>
</html>
```

FILE: styles.css
```css
* { box-sizing: border-box; }
html, body { margin: 0; height: 100%; overflow: hidden; background: #fff; }
body { font: 13px/1 Inter, "Liberation Sans", sans-serif; letter-spacing: -.25px; color: #d4d4d4; white-space: nowrap; }
.defs { position: absolute; }
svg { display: block; flex: none; }
.ic12 { width: 12px; height: 12px; }
.ic14 { width: 14px; height: 14px; }
.ic16 { width: 16px; height: 16px; }
.ic18 { width: 18px; height: 18px; }
.ic20 { width: 20px; height: 20px; }
.dim { color: #777; }
.faint { opacity: .35; }
.light { color: #d8d8d8; }
.orange { color: #c9864a; }
.teal { color: #17a98c; --dm: #2b2b2b; }

.app { display: flex; flex-direction: column; height: 897px; background: #161616; }

/* window title */
.titlebar { flex: none; height: 24px; display: flex; align-items: center; padding: 0 0 0 1px; background: linear-gradient(90deg, #f7f7f8, #f0f4f8 50%, #f6f4f2 75%, #f5f5f5); color: #222; --logo-ring: #fff; --logo-eye: #2b6db5; }
.title-logo { width: 20px; height: 20px; color: #ed8c1d; }
.title-text { margin-left: 4px; font: 12.650px "Noto Sans", sans-serif; letter-spacing: normal; color: #1a1a1a; }
.win-controls { margin-left: auto; display: flex; gap: 35px; padding-right: 21px; }
.win-ic { width: 16px; height: 16px; }

/* top bar */
.topbar { flex: none; height: 31px; display: flex; align-items: center; background: #181818; --logo-ring: #181818; --logo-eye: #ddd; --panel: #1d1d1d; }
.top-logo { width: 20px; height: 20px; margin-left: 9px; color: #ddd; }
.top-menu { display: flex; margin-left: 10px; }
.top-menu span { color: #d0d0d0; margin-right: 15px; }
.top-menu span:nth-child(2) { margin-right: 17.500px; }
.top-menu span:nth-child(3) { margin-right: 16px; }
.top-menu span:nth-child(4) { margin-right: 17px; }
.ws-tabs { display: flex; align-items: flex-end; align-self: flex-end; flex: none; width: 687px; margin-left: 12px; height: 24px; overflow: hidden; padding-bottom: 4px; }
.ws-tab { flex: none; height: 20px; padding: 4px 10.300px 0; color: #a3a3a3; border-radius: 4px 4px 0 0; background: #1c1c1c; margin-right: 1px; }
.ws-tab.active { background: #303030; color: #e6e6e6; width: 59px; padding: 4px 0 0; margin-right: 3px; text-align: center; }
.selector { display: flex; flex: none; height: 21px; background: #1d1d1d; border: 1px solid #2c2c2c; border-radius: 5px; overflow: hidden; color: #cfcfcf; }
.scene-sel { width: 216px; margin-left: 9px; }
.layer-sel { width: 215px; margin-left: 5px; }
.sel-type { width: 35px; flex: none; display: flex; align-items: center; padding-left: 4px; border-right: 1px solid #111; background: #2b2b2b; }
.sel-type .ic12 { margin-left: -1px; width: 11px; }
.sel-name { flex: 1; display: flex; align-items: center; justify-content: space-between; padding: 0 2px 0 7px; background: #222; color: #d4d4d4; }
.sel-copy { width: 23px; flex: none; display: flex; align-items: center; justify-content: center; background: #555; }
.sel-x { width: 22px; flex: none; display: flex; align-items: center; justify-content: center; background: #2d2d2d; color: #777; }

.main { flex: none; height: 818px; display: flex; }
.left-col { width: 1185px; display: flex; flex-direction: column; }
.right-col { width: 247px; margin-left: 3px; display: flex; flex-direction: column; gap: 4px; }

/* viewport */
.viewport { flex: none; height: 755px; position: relative; background: #3d3d3d; border-radius: 6px; overflow: hidden; }
.vp-grid, .vp-scene { position: absolute; left: 0; top: 0; width: 1185px; height: 755px; }
.axis-label { font: bold 11px Inter, sans-serif; text-anchor: middle; fill: #17233a; }
.axis-label.white { fill: #fff; }
.vp-header { position: relative; height: 30px; padding-top: 3px; display: flex; align-items: flex-start; background: #303030; --panel: #1d1d1d; }
.hbtn { flex: none; height: 21px; display: flex; align-items: center; background: #1d1d1d; border-radius: 5px; color: #d0d0d0; overflow: hidden; }
.hbtn > .ic12:last-child { margin-left: auto; }
.seg { height: 100%; width: 21px; display: flex; align-items: center; justify-content: center; flex: none; }
.seg.lit { background: #545454; }
.seg.blue { background: #4672b4; color: #fff; }
.seg-chev { flex: 1; display: flex; justify-content: center; }
.w-type { width: 33px; margin-left: 10px; padding: 0 3px 0 2px; }
.w-mode { width: 121px; margin-left: 8px; padding: 0 3px 0 4px; gap: 4px; }
.vp-menu { display: flex; margin-left: 15px; color: #cfcfcf; line-height: 21px; }
.vp-menu span:nth-child(1) { margin-right: 17px; }
.vp-menu span:nth-child(2) { margin-right: 18px; }
.vp-menu span:nth-child(3) { margin-right: 16px; }
.w-global { width: 88px; margin-left: 83px; padding: 0 3px 0 3px; gap: 4px; background: #222; }
.w-pivot { width: 33px; margin-left: 9px; padding: 0 3px 0 3px; }
.w-snap { width: 56px; margin-left: 8px; padding-right: 3px; }
.w-snap .seg, .w-prop .seg { width: 20px; }
.w-snap .seg + svg { margin-left: 1px; }
.w-prop { width: 56px; margin-left: 8px; padding-right: 3px; color: #bbb; }
.w-vis { width: 33px; margin-left: 190px; padding: 0 3px 0 1px; }
.w-giz { width: 43px; margin-left: 8px; }
.w-over { width: 42px; margin-left: 8px; }
.w-xray { width: 20px; margin-left: 9px; background: #3b3b3b; justify-content: center; }
.w-shade { width: 107px; margin-left: 7px; }
.tool-settings { position: absolute; left: 0; top: 30px; width: 125px; height: 27px; background: #343434; border-radius: 0 0 8px 0; padding: 3px 0 0 9px; }
.selmodes { display: flex; width: 106px; height: 20px; background: #444; border-radius: 4px; overflow: hidden; }
.sm { width: 21.200px; display: flex; align-items: center; justify-content: center; border-right: 1px solid #3a3a3a; background: #505050; }
.sm svg { width: 16px; height: 16px; }
.sm.on { background: #4672b4; }
.options-tab { position: absolute; right: 0; top: 30px; width: 91px; height: 27px; background: #383838; border-radius: 0 0 0 8px; padding: 3px 10px 0 10px; }
.w-options { width: 71px; height: 20px; padding: 0 3px 0 8px; gap: 2px; color: #cfcfcf; }
.panel-arrow { position: absolute; right: 0; top: 72px; width: 9px; height: 20px; background: #333; border-radius: 0 4px 4px 0; display: flex; align-items: center; justify-content: center; color: #bbb; transform: scaleX(-1); }
.panel-arrow svg { width: 9px; height: 12px; }
.viewinfo { position: absolute; left: 73px; top: 65px; color: #f0f0f0; line-height: 20px; }
.tools { position: absolute; left: 9px; top: 67px; width: 43px; display: flex; flex-direction: column; gap: 7px; }
.tool-group { background: #282828; border-radius: 5px; overflow: hidden; display: flex; flex-direction: column; gap: 1px; }
.tool { position: relative; height: 38px; display: flex; align-items: center; justify-content: center; background: #282828; }
.tool.on { background: #4672b4; }
.tool.corner::after { content: ""; position: absolute; right: 2px; bottom: 2px; border: 2px solid transparent; border-right-color: #aaa; border-bottom-color: #aaa; }
.tool-ic { width: 28px; height: 28px; }
.nav-btns { position: absolute; left: 1144px; top: 160px; display: flex; flex-direction: column; gap: 4px; }
.nav-btn { width: 30px; height: 30px; border-radius: 50%; background: #2f2f2f; display: flex; align-items: center; justify-content: center; }
.redo { position: absolute; left: 68px; top: 418px; width: 315px; height: 332px; background: #1f1f1f; border-radius: 5px; padding-top: 3px; }
.redo-title { height: 33.500px; padding: 0 0 9px 8px; display: flex; align-items: center; gap: 3px; color: #b3b3b3; }
.prop-row { height: 24.600px; display: grid; grid-template-columns: 123px 171px; column-gap: 11px; align-items: center; }
.prop-row label { text-align: right; color: #8f8f8f; }
.field { height: 21px; background: #545454; border-radius: 4px; display: flex; align-items: center; justify-content: center; color: #e0e0e0; }
.field.dark { background: #282828; border: 1px solid #3d3d3d; justify-content: space-between; padding: 0 1px 0 8px; color: #d8d8d8; }
.check-row { display: flex; align-items: center; gap: 4px; color: #d8d8d8; }
.check { width: 15px; height: 15px; border-radius: 3px; background: #4672b4; display: flex; align-items: center; justify-content: center; }
.prop-group.g-loc { margin-top: 1.500px; }
.prop-group.g-rot { margin-top: 3px; }
.prop-row.tight { height: 22.400px; }
.prop-row.tight .field { height: 22.400px; border-radius: 0; border-bottom: 1px solid #3c3c3c; }
.prop-row.tight .field.first { border-radius: 4px 4px 0 0; }
.prop-row.tight .field.last { border-radius: 0 0 4px 4px; border-bottom: 0; }
.redbox { position: absolute; border: 12px solid #f00; border-radius: 6px; }
.rb-a { left: 201px; top: 475px; width: 184px; height: 60px; }
.rb-b { left: 199px; top: 598px; width: 185px; height: 57px; }
.rb-c { left: 199px; top: 667px; width: 185px; height: 35px; }

/* timeline */
.timeline { flex: none; height: 62px; margin-top: 1px; display: flex; flex-direction: column; background: #1d1d1d; border-radius: 6px; overflow: hidden; }
.tl-head { flex: none; height: 32px; background: #303030; display: flex; align-items: center; padding-top: 1px; --panel: #1d1d1d; }
.w-tltype { width: 35px; height: 24px; margin-left: 8px; padding: 0 3px 0 4px; }
.w-play { height: 24px; margin-left: 7px; width: 145px; border: 1px solid #2a2a2a; }
.tl-pop { display: flex; align-items: center; justify-content: space-between; padding: 0 3px 0 7px; height: 100%; border-right: 1px solid #2a2a2a; }
.tl-pop:first-child { width: 80px; flex: none; }
.tl-pop:last-child { border: 0; flex: 1; }
.tl-menu { display: flex; margin-left: 13px; gap: 19px; color: #cfcfcf; }
.tl-rec { display: flex; width: 42px; height: 24px; margin-left: 190px; background: #3c3c3c; border-radius: 5px; align-items: center; overflow: hidden; }
.rec-ic { width: 22px; height: 100%; background: #545454; position: relative; display: flex; align-items: center; justify-content: center; }
.rec-ic::after { content: ""; width: 10px; height: 10px; border: 1px solid #cfcfcf; border-radius: 50%; }
.tl-rec svg { margin-left: 4px; }
.tl-trans { display: flex; margin-left: 7px; width: 133px; height: 24px; background: #545454; border-radius: 5px; overflow: hidden; }
.tl-trans > span { flex: 1; display: flex; align-items: center; justify-content: center; border-right: 1px solid #484848; color: #f0f0f0; }
.tl-trans > span:last-child { border: 0; }
.tl-frame { margin-left: 199px; width: 81px; height: 24px; background: #545454; border-radius: 5px; display: flex; align-items: center; justify-content: center; color: #e0e0e0; }
.tl-range { margin-left: 8px; width: 220px; height: 24px; display: flex; background: #545454; border-radius: 5px; overflow: hidden; }
.tl-clock { width: 22px; display: flex; align-items: center; justify-content: center; background: #3a3a3a; color: #e6e6e6; flex: none; }
.tl-val { display: flex; justify-content: space-between; align-items: center; padding: 0 13px 0 17px; width: 99px; flex: none; border-left: 1px solid #444; color: #e0e0e0; }
.tl-val + .tl-val { padding-right: 16px; }
.tl-scrub { position: relative; flex: 1; }
.ruler { display: flex; padding: 5px 0 0 83px; height: 19px; color: #b8b8b8; }
.ruler span { width: 88.200px; text-align: center; flex: none; }
.cur-frame { position: absolute; left: 30px; top: 2px; width: 27px; height: 17px; background: #4672b4; border-radius: 4px 4px 0 0; display: flex; align-items: center; justify-content: center; color: #fff; }
.tl-scroll { position: relative; margin: 0 12px 0 8px; height: 9px; background: #545454; border-radius: 4px; }
.knob { position: absolute; left: 0; top: 1px; width: 7px; height: 7px; border-radius: 50%; background: #3a3a3a; border: 1px solid #777; }
.knob + .knob { left: auto; right: 0; }
.tl-ticks { position: absolute; left: 43px; right: 14px; bottom: 1px; height: 2px; background: repeating-linear-gradient(90deg, #707070 0 1px, transparent 1px 44.100px); }
.tl-arrow { position: absolute; top: 17px; width: 8px; height: 12px; color: #999; }
.tl-arrow-l { left: 0; }
.tl-arrow-r { right: 0; transform: scaleX(-1); }

/* outliner */
.outliner { flex: none; height: 261px; background: #282828; border-radius: 6px; position: relative; overflow: hidden; --panel: #282828; }
.ol-head { height: 30px; padding: 3px 0 0 9px; display: flex; align-items: flex-start; gap: 6px; background: #303030; }
.w-oltype { width: 35px; height: 21px; padding: 0 3px 0 4px; background: #1d1d1d; border: 1px solid #333; --panel: #1d1d1d; }
.searchbox { display: flex; align-items: center; gap: 9px; height: 21px; background: #1d1d1d; border: 1px solid #333; border-radius: 5px; color: #666; padding-left: 4px; }
.searchbox svg { color: #ccc; }
.ol-search { width: 129px; margin-left: 13px; }
.ol-tree { position: relative; }
.ol-row { height: 22.500px; display: flex; align-items: center; background: #282828; color: #c4c4c4; }
.ol-row.alt { background: #2b2b2b; }
.ol-row.sel { background: #2e4a80; }
.lvl0 { padding-left: 24px; }
.lvl0 .ol-name { margin-left: 6px; }
.lvl1 { padding-left: 24px; }
.lvl2 { padding-left: 47px; }
.chev { color: #b8b8b8; margin-right: 4px; }
.coll-hi { width: 20px; height: 20px; display: flex; align-items: center; justify-content: center; background: #505050; border-radius: 5px; border: 1px solid #6a6a6a; margin: 0 5px 0 1px; }
.lvl2 .ol-name { margin-left: 7px; }
.mesh-hi { width: 22px; height: 20px; margin: 0 -2px; display: flex; align-items: center; justify-content: center; background: #4c6795; border: 1px solid #5f7aa8; border-radius: 5px; }
.n-cyl { color: #e8a33d; }
.n-cube { width: 56px; }
.n-light { width: 53px; }
.cam-chip { margin-left: 22px; width: 7px; height: 20px; background: #5a5a5a; border-radius: 3px 0 0 3px; overflow: hidden; display: flex; align-items: center; --dm: #5a5a5a; }
.cam-chip svg { margin-left: -1px; }
.ol-right { margin-left: auto; display: flex; align-items: center; gap: 7px; padding: 0 15px 2px 0; color: #e8e8e8; }
.vis-check { width: 12px; height: 12px; background: #dcdcdc; border-radius: 2px; margin-right: 1px; }
.tree-line { position: absolute; left: 32px; top: 49px; width: 1px; height: 79px; background: #5a5a5a; }
.ol-scroll { position: absolute; left: 9px; right: 27px; bottom: 3px; height: 4px; background: #3f3f3f; border-radius: 2px; }

/* properties */
.props { flex: 1; background: #303030; border-radius: 6px; overflow: hidden; display: flex; flex-direction: column; }
.p-head { flex: none; height: 27px; padding: 3px 0 0 9px; display: flex; align-items: flex-start; }
.p-search { width: 128px; margin-left: 27px; }
.w-pchev { width: 21px; height: 21px; margin-left: 20px; border: 1px solid #333; justify-content: center; }
.hbtn.w-pchev > .ic12:last-child { margin: 0; }
.p-body { flex: 1; display: flex; min-height: 0; }
.p-tabs { flex: none; width: 32px; background: #1f1f1f; padding-top: 9px; display: flex; flex-direction: column; --panel: #1f1f1f; --dm: #1f1f1f; }
.ptab { flex: none; height: 31.500px; display: flex; align-items: center; justify-content: center; }
.ptab.gap { margin-top: 9px; }
.ptab.active { background: #303030; margin-left: 2px; padding-right: 2px; border-radius: 5px 0 0 5px; }
.t-grey { color: #c8c8c8; }
.t-red { color: #c4545c; }
.t-orange { color: #c98a4e; }
.t-blue { color: #5f8ad6; }
.t-teal { color: #1cab88; }
.t-pink { color: #d2616d; }
.p-content { flex: 1; padding: 0 10px 0 9px; }
.p-crumb { height: 50px; display: flex; align-items: center; color: #d0d0d0; padding: 1px 1px 8px 2px; }
.p-crumb span { margin-left: 8px; margin-right: auto; }
.slot-row { display: flex; gap: 11px; }
.slot-list { position: relative; width: 165px; height: 90px; background: #282828; border: 1px solid #393939; border-radius: 5px; }
.slot-play { position: absolute; left: 11px; bottom: 7px; width: 9px; height: 9px; }
.slot-grip { position: absolute; left: 86px; bottom: 5px; color: #999; font-size: 10px; letter-spacing: -.5px; line-height: 10px; }
.slot-side { width: 20px; display: flex; flex-direction: column; gap: 8px; }
.slot-btns { height: 43px; background: #545454; border-radius: 5px; display: flex; flex-direction: column; color: #e0e0e0; overflow: hidden; font-size: 17px; }
.slot-btns span { flex: 1; display: flex; align-items: center; justify-content: center; border-bottom: 1px solid #3c3c3c; }
.slot-btns span:last-child { border: 0; }
.w-slotchev { width: 20px; height: 21px; border: 1px solid #333; justify-content: center; }
.hbtn.w-slotchev > .ic12:last-child { margin: 0; }
.mat-sel { display: flex; margin-top: 6px; width: 196px; height: 21px; border-radius: 5px; overflow: hidden; }
.mat-type { width: 35px; display: flex; align-items: center; padding-left: 4px; background: #282828; color: #e8e8e8; }
.mat-new { flex: 1; display: flex; align-items: center; background: #545454; color: #dedede; }
.mat-new b { font-weight: 400; font-size: 17px; width: 21px; text-align: center; }
.mat-new span { flex: 1; text-align: center; }

/* status */
.status { flex: none; height: 24px; display: flex; align-items: center; background: #181818; color: #8f8f8f; }
.st { display: flex; align-items: center; gap: 12px; flex: none; }
.st-ic { width: 14px; height: 19px; color: #a8a8a8; }
.st-a { width: 237px; margin-left: 11px; }
.st-b { width: 237px; }
.st-ver { margin-left: auto; padding-right: 13px; letter-spacing: .3px; }
```

FILE: grid.js
```js
// Ground-plane grid of the 3D view, projected with the viewport camera.
(function () {
  var canvas = document.getElementById('grid');
  var ctx = canvas.getContext('2d');
  var F = 823, D = 9.3, cx = 592.5, cy = 377;
  var s = 0.26, c = 0.966, rx = 0.64, ry = 0.77;

  function project(x, y) {
    var X = rx * x + ry * y;
    var Y = -ry * s * x + rx * s * y;
    var Z = D - ry * c * x + rx * c * y;
    return [cx + F * X / Z, cy - F * Y / Z, Z];
  }

  function clamp(v) { return Math.max(0, Math.min(1, v)); }

  function line(n, alongX, rgb) {
    var major = n % 10 === 0;
    var prev = null;
    for (var t = -80; t <= 80; t += 1) {
      var p = alongX ? project(t, n) : project(n, t);
      if (p[2] > 0.4 && prev && prev[2] > 0.4) {
        var z = (p[2] + prev[2]) / 2;
        var a = clamp(1.1 - z / (major ? 80 : 40));
        a = a * a;
        if (rgb) a = clamp(1.2 - z / 60);
        if (a > 0.01) {
          ctx.strokeStyle = 'rgba(' + (rgb || '98,98,98') + ',' + a.toFixed(3) + ')';
          ctx.beginPath();
          ctx.moveTo(prev[0], prev[1]);
          ctx.lineTo(p[0], p[1]);
          ctx.stroke();
        }
      }
      prev = p;
    }
  }

  ctx.lineWidth = 1;
  for (var n = -80; n <= 80; n++) {
    if (n === 0) continue;
    line(n, true);
    line(n, false);
  }
  ctx.lineWidth = 1.4;
  line(0, true, '135,50,62');
  line(0, false, '100,125,44');
})();
```
